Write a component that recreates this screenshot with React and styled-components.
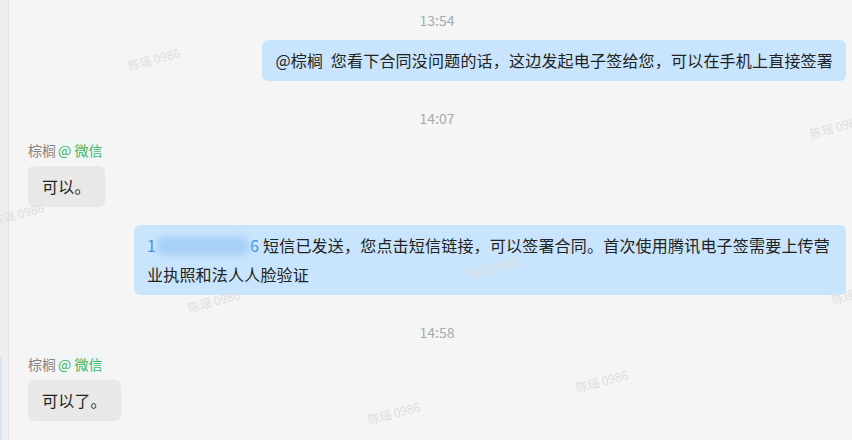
import React from 'react';
import styled, { createGlobalStyle } from 'styled-components';

const messages = [
  { type: 'time', text: '13:54' },
  { type: 'out', text: '@棕榈  您看下合同没问题的话，这边发起电子签给您，可以在手机上直接签署' },
  { type: 'time', text: '14:07' },
  { type: 'in', name: '棕榈', text: '可以。' },
  { type: 'out', phone: true, text: '短信已发送，您点击短信链接，可以签署合同。首次使用腾讯电子签需要上传营业执照和法人人脸验证' },
  { type: 'time', text: '14:58' },
  { type: 'in', name: '棕榈', text: '可以了。' },
];

const marks = [
  { x: 118, y: 50 },
  { x: 800, y: 118 },
  { x: -18, y: 205 },
  { x: 458, y: 258 },
  { x: 178, y: 292 },
  { x: 822, y: 284 },
  { x: 566, y: 372 },
  { x: 358, y: 404 },
];

const App = () => {
  const renderItem = (m, index) => {
    if (m.type === 'time') {
      return <Time key={index} first={index === 0}>{m.text}</Time>;
    }
    if (m.type === 'in') {
      return (
        <Incoming key={index}>
          <Sender>
            {m.name}
            <Source><Tag>@</Tag> <Tag>微信</Tag></Source>
          </Sender>
          <Bubble>{m.text}</Bubble>
        </Incoming>
      );
    }
    return (
      <Outgoing key={index} $afterIn={index > 0 && messages[index - 1].type === 'in'}>
        <Bubble $mine>
          {m.phone && (
            <>
              <Phone>1</Phone>
              <Blur />
              <Phone>6</Phone>{' '}
            </>
          )}
          {m.text}
        </Bubble>
      </Outgoing>
    );
  };

  return (
    <>
      <GlobalStyle />
      <Wrapper>
        <SidePanel>
          <SideFill />
          <SideActive />
        </SidePanel>
        <Chat>
          {messages.map(renderItem)}
          {marks.map((p, i) => (
            <Watermark key={i} style={{ left: p.x, top: p.y }}>陈瑶 0986</Watermark>
          ))}
        </Chat>
      </Wrapper>
    </>
  );
};

const GlobalStyle = createGlobalStyle`
  html, body {
    margin: 0;
    padding: 0;
    background: #f5f5f5;
  }
  body {
    font-family: "Noto Sans CJK SC", "Noto Sans", sans-serif;
  }
`;

const Wrapper = styled.div`
  width: 852px;
  height: 440px;
  display: flex;
  overflow: hidden;
  background: #f5f5f5;
`;

const SidePanel = styled.div`
  width: 8px;
  flex-shrink: 0;
  background: #efefef;
  border-right: 1px solid #e4e4e4;
  display: flex;
  flex-direction: column;
`;

const SideFill = styled.div`
  flex: 1;
`;

const SideActive = styled.div`
  height: 84px;
  border-left: 2px solid #d6e4f5;
`;

const Chat = styled.div`
  position: relative;
  flex: 1;
  padding: 10px 6px 0 19px;
  display: flex;
  flex-direction: column;
  box-sizing: border-box;
`;

const Time = styled.div`
  height: 20px;
  line-height: 20px;
  margin: ${({ first }) => (first ? 0 : 27)}px 0 10px;
  text-align: center;
  font-size: 14px;
  color: #a3abb3;
`;

const Incoming = styled.div`
  display: flex;
  flex-direction: column;
  align-items: flex-start;
  margin-top: 3px;
`;

const Sender = styled.div`
  display: flex;
  align-items: center;
  gap: 2px;
  height: 18px;
  margin-bottom: 7px;
  font-size: 14px;
  color: #858585;
`;

const Source = styled.span`
  color: #45b563;
`;

const Tag = styled.span`
  background: #eef6f8;
`;

const Outgoing = styled.div`
  display: flex;
  justify-content: flex-end;
  margin-top: ${({ $afterIn }) => ($afterIn ? 18 : 0)}px;
`;

const Bubble = styled.div`
  max-width: 686px;
  padding: 6px 13px;
  border-radius: 6px;
  font-size: 16px;
  line-height: 29px;
  letter-spacing: 0.2px;
  color: #222222;
  white-space: pre-wrap;
  background: ${({ $mine }) => ($mine ? '#c9e5fd' : '#e8e8e8')};
  ${({ $mine }) => !$mine && 'padding: 6px 14px;'}
`;

const Phone = styled.span`
  color: #3d8fe6;
`;

const Blur = styled.span`
  display: inline-block;
  width: 94px;
  height: 20px;
  vertical-align: -4px;
  border-radius: 10px;
  background: #a9d1f7;
  filter: blur(3px);
`;

const Watermark = styled.span`
  position: absolute;
  font-size: 12px;
  color: #dedede;
  transform: rotate(-15deg);
  pointer-events: none;
  white-space: nowrap;
`;

export default App;
